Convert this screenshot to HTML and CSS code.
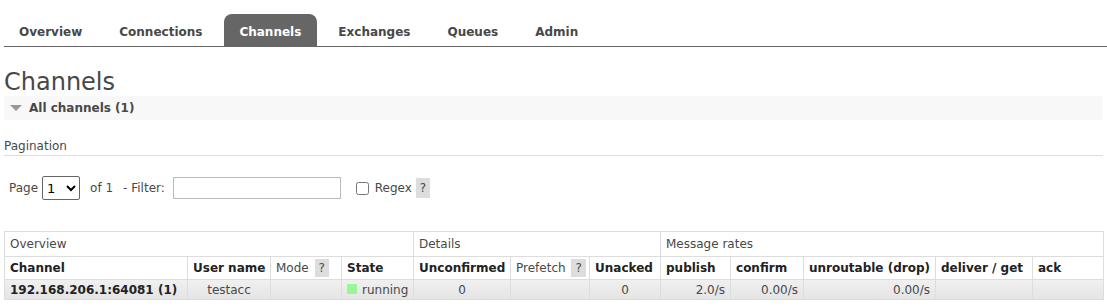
FILE: index.html
```html
<!DOCTYPE html>
<html lang="en">
<head>
  <meta charset="utf-8">
  <title>RabbitMQ Management: Channels</title>
  <link rel="stylesheet" href="styles.css">
</head>
<body>
  <ul class="tabs">
    <li><a href="#">Overview</a></li>
    <li><a href="#">Connections</a></li>
    <li class="selected"><a href="#">Channels</a></li>
    <li><a href="#">Exchanges</a></li>
    <li><a href="#">Queues</a></li>
    <li><a href="#">Admin</a></li>
  </ul>

  <div class="main">
    <h1>Channels</h1>
    <div class="section">
      <h2><span class="arrow"></span>All channels (1)</h2>
      <div class="hider">
        <h3>Pagination</h3>
        <div class="filter">
          <label>Page</label>
          <select class="page-select"><option>1</option></select>
          <span class="of">of 1</span>
          <label>- Filter:</label>
          <input type="text" class="filter-text">
          <input type="checkbox" class="regex-box">
          <label>Regex</label>
          <span class="help">?</span>
        </div>

        <table class="list">
          <colgroup>
            <col style="width:183px"><col style="width:83px"><col style="width:71px"><col style="width:72px">
            <col style="width:97px"><col style="width:79px"><col style="width:71px">
            <col style="width:70px"><col style="width:73px"><col style="width:132px"><col style="width:97px"><col style="width:71px">
          </colgroup>
          <thead>
            <tr class="group">
              <th colspan="4">Overview</th>
              <th colspan="3">Details</th>
              <th colspan="5">Message rates</th>
            </tr>
            <tr class="cols">
              <th>Channel</th>
              <th>User name</th>
              <th class="plain">Mode <span class="help">?</span></th>
              <th>State</th>
              <th>Unconfirmed</th>
              <th class="plain">Prefetch <span class="help">?</span></th>
              <th>Unacked</th>
              <th>publish</th>
              <th>confirm</th>
              <th>unroutable (drop)</th>
              <th>deliver / get</th>
              <th>ack</th>
            </tr>
          </thead>
          <tbody>
            <tr>
              <td class="name">192.168.206.1:64081 (1)</td>
              <td class="c">testacc</td>
              <td></td>
              <td><span class="state-box"></span>running</td>
              <td class="c">0</td>
              <td></td>
              <td class="c">0</td>
              <td class="r">2.0/s</td>
              <td class="r">0.00/s</td>
              <td class="r">0.00/s</td>
              <td></td>
              <td></td>
            </tr>
          </tbody>
        </table>
      </div>
    </div>
  </div>
</body>
</html>
```

FILE: styles.css
```css
html, body {
  margin: 0;
  padding: 0;
  background: #fff;
}

body {
  font-family: "DejaVu Sans", Verdana, sans-serif;
  font-size: 12px;
  color: #484848;
}

a {
  text-decoration: none;
}

/* top navigation */
.tabs {
  list-style: none;
  margin: 14px 0 0 4px;
  padding: 0;
  display: flex;
  gap: 6px;
  border-bottom: 1px solid #666;
  height: 32px;
}

.tabs li {
  display: flex;
  align-items: center;
  padding: 3px 16px 0 15px;
  border-radius: 8px 8px 0 0;
}

.tabs li a {
  font-size: 12px;
  font-weight: bold;
  color: #484848;
}

.tabs li.selected {
  background: #666;
}

.tabs li.selected a {
  color: #fff;
}

.main {
  padding: 0 4px;
}

h1 {
  font-size: 24px;
  font-weight: normal;
  margin: 21px 0 0 0;
  line-height: 28px;
  color: #484848;
}

.section h2 {
  margin: 0;
  height: 24px;
  display: flex;
  align-items: center;
  background: #f8f8f8;
  font-size: 12px;
  font-weight: bold;
  color: #484848;
}

.arrow {
  display: inline-block;
  width: 0;
  height: 0;
  border-left: 6px solid transparent;
  border-right: 6px solid transparent;
  border-top: 6px solid #999;
  margin: 0 7px 0 6px;
}

h3 {
  font-size: 12px;
  font-weight: normal;
  color: #484848;
  margin: 19px 0 0 0;
  padding-bottom: 2px;
  border-bottom: 1px solid #ddd;
}

.filter {
  display: flex;
  align-items: center;
  margin: 20px 0 0 5px;
  height: 24px;
}

.filter label {
  font-size: 12px;
}

.page-select {
  margin: 0 0 0 4px;
  width: 38px;
  height: 24px;
  font-size: 13px;
  font-family: "DejaVu Sans", sans-serif;
  border: 1px solid #666;
  border-radius: 2px;
  background: #fff;
}

.of {
  margin: 0 10px 0 10px;
}

.filter-text {
  margin: 0 0 0 8px;
  width: 166px;
  height: 20px;
  padding: 0;
  border: 1px solid #bbb;
}

.regex-box {
  margin: 0 6px 0 15px;
  width: 13px;
  height: 13px;
}

.help {
  display: inline-block;
  background: #ddd;
  padding: 2px 4px;
  margin-left: 4px;
  line-height: 16px;
  font-size: 12px;
}

/* channel table */
.list {
  margin-top: 31px;
  border-collapse: collapse;
  table-layout: fixed;
  width: 1099px;
}

.list th, .list td {
  border: 1px solid #ddd;
  padding: 0 5px;
  text-align: left;
  white-space: nowrap;
  overflow: hidden;
}

.list tr.group th {
  font-weight: normal;
  height: 24px;
  color: #484848;
}

.list tr.cols th {
  font-weight: bold;
  height: 22px;
  color: #222;
}

.list tr.cols th.plain {
  font-weight: normal;
  color: #484848;
}

.list tr.cols th .help {
  padding: 1px 4px;
  margin-left: 2px;
}

.list tbody tr {
  background: linear-gradient(#f0f0f0, #e4e4e4);
}

.list td {
  height: 19px;
  color: #484848;
}

.list td.name {
  font-weight: bold;
  color: #222;
}

.list td.c {
  text-align: center;
}

.list td.r {
  text-align: right;
}

.state-box {
  display: inline-block;
  width: 10px;
  height: 10px;
  background: #98f898;
  margin-right: 5px;
}
```
